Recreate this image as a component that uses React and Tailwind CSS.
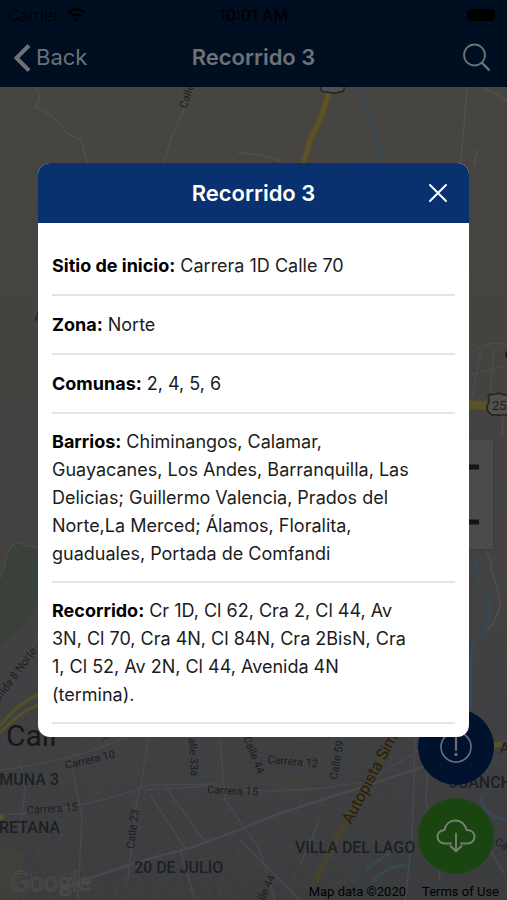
import { useState } from 'react';

const details = [
  { label: 'Sitio de inicio:', value: 'Carrera 1D Calle 70' },
  { label: 'Zona:', value: 'Norte' },
  { label: 'Comunas:', value: '2, 4, 5, 6' },
  {
    label: 'Barrios:',
    value:
      'Chiminangos, Calamar, Guayacanes, Los Andes, Barranquilla, Las Delicias; Guillermo Valencia, Prados del Norte,La Merced; Álamos, Floralita, guaduales, Portada de Comfandi',
    long: true
  },
  {
    label: 'Recorrido:',
    value:
      'Cr 1D, Cl 62, Cra 2, Cl 44, Av 3N, Cl 70, Cra 4N, Cl 84N, Cra 2BisN, Cra 1, Cl 52, Av 2N, Cl 44, Avenida 4N (termina).',
    long: true
  }
];

const StatusBar = () => (
  <div className="grid h-[30px] grid-cols-3 items-center px-2 text-base text-black">
    <div className="flex items-center gap-2">
      <span className="font-light">Carrier</span>
      <svg width="19" height="14" viewBox="0 0 19 14" fill="none" stroke="#000" strokeWidth="2.6">
        <path d="M1 5.2Q9.500 -2.200 18 5.200" />
        <path d="M4.200 8.600Q9.500 4 14.800 8.600" />
        <path d="M9.500 13.500L6.800 10.800Q9.500 8.800 12.200 10.800Z" fill="#000" stroke="none" />
      </svg>
    </div>
    <span className="text-center font-medium">10:01 AM</span>
    <span className="mr-1 h-3 w-7 justify-self-end rounded-sm bg-black" />
  </div>
);

const NavBar = () => (
  <nav className="grid h-[57px] grid-cols-3 items-center px-3 pb-[2px] text-[22px] text-[#6e7175]">
    <button type="button" className="flex items-center gap-[5px]">
      <svg width="19" height="30" viewBox="0 0 19 30" fill="none" stroke="#6e7175" strokeWidth="4">
        <path d="M17 2.500L4.500 15L17 27.500" />
      </svg>
      Back
    </button>
    <h1 className="text-center font-semibold whitespace-nowrap">Recorrido 3</h1>
    <button type="button" aria-label="Buscar" className="mr-1 justify-self-end">
      <svg width="29" height="29" viewBox="0 0 29 29" fill="none" stroke="#6e7175" strokeWidth="1.8">
        <circle cx="12.500" cy="12" r="10.500" />
        <path d="M19.800 19.600L27.500 27.500" strokeWidth="2.400" />
      </svg>
    </button>
  </nav>
);

const CityMap = () => (
  <svg
    className="absolute inset-0 h-full w-full"
    viewBox="0 87 507 813"
    preserveAspectRatio="xMidYMid slice"
    fontFamily="Roboto, sans-serif"
    fill="none"
  >
    <defs>
      <linearGradient id="land" x1="0" y1="0" x2="0" y2="1">
        <stop offset="0" stopColor="#474542" />
        <stop offset="0.330" stopColor="#444340" />
        <stop offset="0.600" stopColor="#434242" />
        <stop offset="0.800" stopColor="#3f4042" />
        <stop offset="1" stopColor="#3b3c3e" />
      </linearGradient>
      <pattern id="blocks" width="13" height="9" patternUnits="userSpaceOnUse" patternTransform="rotate(-14)">
        <path d="M0 0H13M0 0V9" stroke="#47484a" strokeWidth="0.700" />
      </pattern>
      <pattern id="blocksEast" width="10" height="12" patternUnits="userSpaceOnUse" patternTransform="rotate(12)">
        <path d="M0 0H10M0 0V12" stroke="#454749" strokeWidth="0.700" />
      </pattern>
    </defs>
    <rect y="87" width="507" height="813" fill="url(#land)" />
    <path d="M70 735H235L210 900H20Z" fill="url(#blocks)" />
    <path d="M235 735H420V820L330 900H215Z" fill="url(#blocksEast)" />
    <path d="M470 345H507V398H470Z" fill="url(#blocks)" />

    {/* parks and yellow patches */}
    <path d="M0 578L9 549Q14 541 25 545Q36 552 45 545V590L28 622L0 648Z" fill="#3a413a" />
    <path d="M0 578L4 567Q8 549 12 546Q18 540 24 545L45 549" stroke="#4b4e4b" strokeWidth="1.200" />
    <path d="M35 735H58V762L36 758Z M270 780L306 774L312 790L280 800Z M0 845L25 852L18 900H0Z" fill="#43413a" opacity="0.700" />

    {/* minor roads */}
    <g stroke="#514f4c" strokeWidth="1.500">
      <path d="M36 87Q43 98 35 107Q53 114 62 127Q68 136 81 139L88 165" />
      <path d="M194 87Q186 105 181 116Q170 137 164 165" />
      <path d="M238 153Q262 153 280 161M467 87L464 125L460 165M478 149L474 165M484 87L507 101" />
      <path d="M470 352Q495 338 507 346M470 375L507 365M472 398L481 350M490 395L494 350" strokeWidth="1" />
      <path d="M503 410L502 437M485 550Q493 559 491 570Q500 595 500 606Q496 621 487 631" />
    </g>
    <g stroke="#48494c" strokeWidth="1.500">
      <path d="M0 700Q25 670 39 630M0 770Q80 760 130 735M0 815Q75 812 150 785L220 784M148 738L142 780L137 800L128 880" />
      <path d="M143 790L210 786Q290 798 370 780L420 750M150 795L185 848M165 786L205 842" />
      <path d="M60 890Q120 865 190 848Q230 834 275 815L507 740" strokeWidth="2.500" />
      <path d="M220 740L225 800L260 850L275 900M180 850L195 900M415 738L412 840L405 900M430 738L426 800L440 880" />
      <path d="M70 760L82 815L78 900M20 760L25 790L20 830M240 840L300 900M320 820L300 865M490 850L505 875" />
    </g>

    {/* water */}
    <g stroke="#384852" strokeWidth="3">
      <path d="M364 87Q360 101 368 113Q376 129 379 142L380 165" />
      <path d="M474 550L479 585Q492 605 490 615Q487 628 472 646L471 710" />
      <path d="M366 870Q384 854 409 844M372 882Q391 863 407 866M481 796Q480 815 507 820" />
    </g>
    <g stroke="#3f4850" strokeWidth="1.200">
      <path d="M8 90Q8 101 18 105M65 105L65 120L82 137Q92 150 103 150L126 154M220 149Q222 132 242 128L275 137M300 149L360 162M387 133L425 142L461 153M494 212H507M497 475L496 530L504 548M0 478H5" />
    </g>

    {/* highways */}
    <path d="M329 92Q320 124 311 137L303 165" stroke="#544b29" strokeWidth="7" />
    <path d="M329 92Q320 124 311 137L303 165" stroke="#5d5327" strokeWidth="4" />
    <path d="M469 405H487" stroke="#5a5128" strokeWidth="9" />
    <path d="M0 726Q18 703 39 694M0 733Q23 708 45 703" stroke="#545028" strokeWidth="3" />
    <path d="M0 815L3 819M492 746L502 744" stroke="#5a5227" strokeWidth="5" />
    <path d="M392 738Q364 795 337 836L315 882" stroke="#45422f" strokeWidth="7" />

    {/* road shields */}
    <path d="M321 87Q320 92 326 92L333 93L340 92Q345 92 344 87" fill="#504f4d" stroke="#222" strokeWidth="1.500" />
    <path d="M490 394Q494 396 498 393L505 395L512 393V415H492Q486 411 487 406Q491 400 488 397Z" fill="#51504d" stroke="#222" strokeWidth="1.500" />
    <text x="492" y="410" fontSize="13" fill="#1d1d1d">25</text>
    <circle cx="510" cy="355" r="5" fill="#1d1d1d" />

    {/* street names */}
    <g fill="#1d1d1e" fontSize="11">
      <text transform="translate(186 109) rotate(-70)">Calle</text>
      <text transform="translate(-9 714) rotate(-54)">Avenida 8 Norte</text>
      <text transform="translate(66 769) rotate(-13)">Carrera 10</text>
      <text transform="translate(27 814) rotate(-4)">Carrera 15</text>
      <text transform="translate(188 731) rotate(86)">Calle 33a</text>
      <text transform="translate(243 738) rotate(68)">Calle 44</text>
      <text transform="translate(134 849) rotate(-83)">Calle 23</text>
      <text transform="translate(207 793) rotate(3)">Carrera 15</text>
      <text transform="translate(267 763) rotate(5)">Carrera 12</text>
      <text transform="translate(337 780) rotate(-80)">Calle 59</text>
      <text transform="translate(259 913) rotate(-66)">Calle 44</text>
      <text transform="translate(494 844) rotate(28)">Carrera</text>
      <text x="34" y="321" fontSize="13">A</text>
      <text transform="translate(101 737) rotate(70)" fontSize="9">1</text>
    </g>
    <text transform="translate(351 825) rotate(-62)" fontSize="16" fill="#251d10">Autopista Simón</text>
    <text x="500" y="753" fontSize="14" fill="#251d10">A</text>

    {/* districts */}
    <g fill="#1d1f23" fontSize="16" fontWeight="500">
      <text x="59" y="785" textAnchor="end">COMUNA 3</text>
      <text x="60" y="833" textAnchor="end">BRETANA</text>
      <text x="134" y="873">20 DE JULIO</text>
      <text x="295" y="853">VILLA DEL LAGO</text>
      <text x="449" y="788">JUANCHITO</text>
    </g>
    <text x="6" y="746" fontSize="30" fill="#171719">Cali</text>
    <text x="10" y="891" fontSize="26" fontFamily="Lato, sans-serif" fill="#3f3f40" stroke="#505051" strokeWidth="0.800">
      Google
    </text>
  </svg>
);

const ZoomControls = () => (
  <div className="absolute top-[353px] right-[14px] flex w-[54px] flex-col bg-[#4b4b4b] shadow-sm">
    <button type="button" aria-label="Acercar" className="flex h-[54px] items-center justify-center">
      <svg width="26" height="26" viewBox="0 0 26 26" stroke="#151515" strokeWidth="5">
        <path d="M0 13H26M13 0V26" />
      </svg>
    </button>
    <button type="button" aria-label="Alejar" className="flex h-[55px] items-center justify-center">
      <svg width="26" height="26" viewBox="0 0 26 26" stroke="#151515" strokeWidth="5">
        <path d="M0 13H26" />
      </svg>
    </button>
  </div>
);

const MapActions = () => (
  <div className="absolute right-[13px] bottom-[26px] flex flex-col gap-[13px]">
    <button
      type="button"
      aria-label="Información"
      className="flex h-[76px] w-[76px] items-center justify-center rounded-full bg-[#00122e]"
    >
      <svg width="32" height="32" viewBox="0 0 32 32" fill="none" stroke="#696d73" strokeWidth="1.700">
        <circle cx="16" cy="16" r="15" />
        <path d="M16 7V19" strokeWidth="2.200" strokeLinecap="round" />
        <circle cx="16" cy="23.500" r="1.700" fill="#696d73" stroke="none" />
      </svg>
    </button>
    <button
      type="button"
      aria-label="Descargar"
      className="flex h-[76px] w-[76px] items-center justify-center rounded-full bg-[#1b4510]"
    >
      <svg
        width="40"
        height="34"
        viewBox="0 0 40 34"
        fill="none"
        stroke="#748071"
        strokeWidth="1.900"
        strokeLinecap="round"
        strokeLinejoin="round"
      >
        <path d="M15 24.500H9C4.500 24.500 1.500 21.500 1.500 17.800C1.500 14 4.500 11.500 8.500 11C9.500 5 14 1.500 19.500 1.500C25 1.500 29.500 5.500 30.500 11C35 11 38.500 13.500 38.500 17.800C38.500 21.500 35.500 24.500 31.500 24.500H25" />
        <path d="M20 14.500V32M14.500 27L20 32.500L25.500 27" />
      </svg>
    </button>
  </div>
);

const DetailDialog = ({ onClose }) => (
  <div className="absolute inset-0 flex items-center justify-center px-[38px]">
    <section
      role="dialog"
      aria-labelledby="dialog-title"
      className="w-full max-w-xl overflow-hidden rounded-xl bg-white"
    >
      <header className="grid h-[60px] grid-cols-[1fr_auto_1fr] items-center bg-[#0a316f] px-5 text-white">
        <span />
        <h2 id="dialog-title" className="text-[22px] font-semibold">
          Recorrido 3
        </h2>
        <button type="button" aria-label="Cerrar" onClick={onClose} className="justify-self-end">
          <svg width="22" height="22" viewBox="0 0 22 22" stroke="#fff" strokeWidth="2" strokeLinecap="round">
            <path d="M3 3L19 19M19 3L3 19" />
          </svg>
        </button>
      </header>
      <div className="px-[14px] pt-[14px] pb-[13px]">
        {details.map((item) => (
          <p
            key={item.label}
            className={`border-b-2 border-[#e4e4e4] pr-9 text-lg leading-7 text-[#1c1c1c] ${
              item.long ? 'pt-[14px] pb-[13px]' : 'pt-[15px] pb-[14px]'
            }`}
          >
            <strong className="font-bold text-black">{item.label}</strong> {item.value}
          </p>
        ))}
      </div>
    </section>
  </div>
);

export default function App() {
  const [open, setOpen] = useState(true);

  return (
    <div className="relative flex min-h-screen flex-col overflow-hidden bg-[#444240] font-['Inter',sans-serif]">
      <header className="bg-[#000e21]">
        <StatusBar />
        <NavBar />
      </header>

      <main className="relative flex-1 overflow-hidden">
        <CityMap />
        <ZoomControls />
        <MapActions />
        <div className="absolute right-2 bottom-0 flex gap-4 font-['Roboto',sans-serif] text-[13px] leading-4 text-black">
          <span>Map data ©2020</span>
          <a href="#terms">Terms of Use</a>
        </div>
      </main>

      {open && <DetailDialog onClose={() => setOpen(false)} />}
    </div>
  );
}
